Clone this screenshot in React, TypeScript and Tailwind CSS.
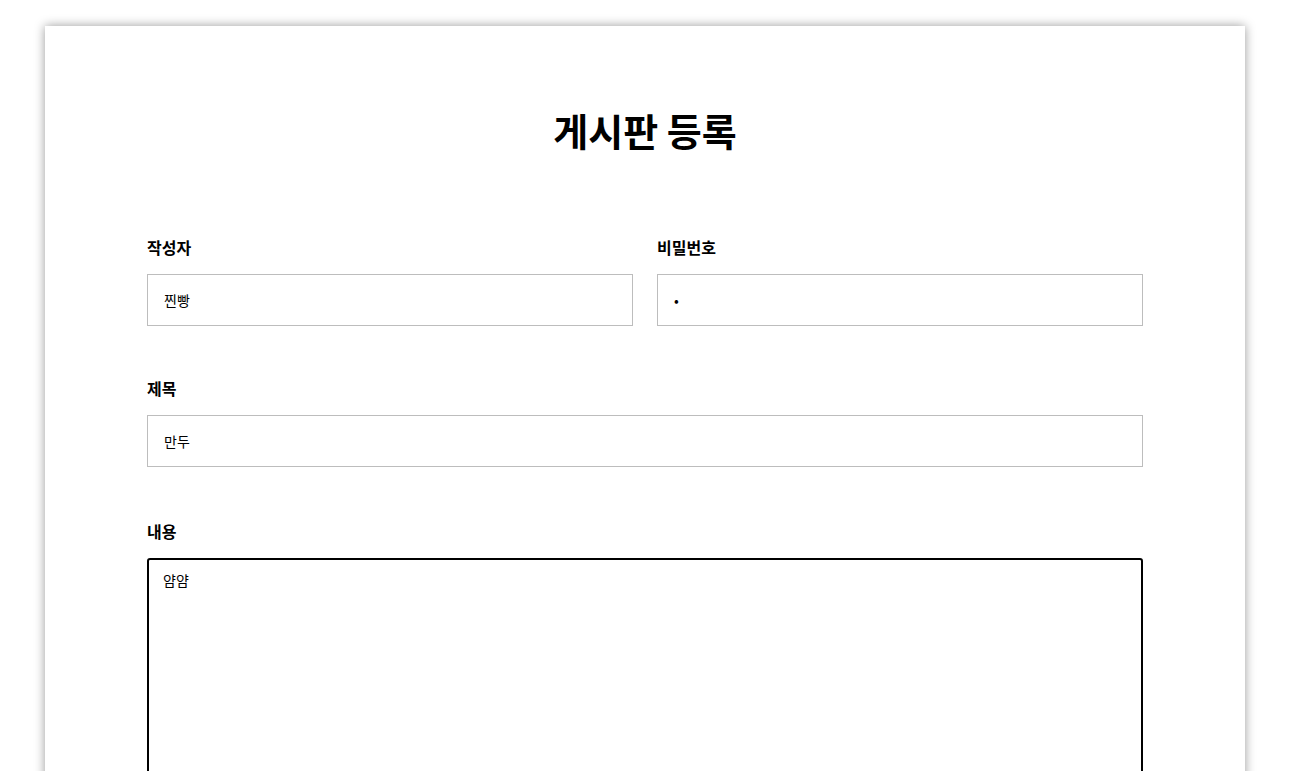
import React, { useState } from 'react';

const font = { fontFamily: '"Noto Sans CJK KR", "Noto Sans", sans-serif' };

export default function App() {
  const [writer, setWriter] = useState('찐빵');
  const [password, setPassword] = useState('1');
  const [title, setTitle] = useState('만두');
  const [contents, setContents] = useState('얌얌');

  return (
    <div className="min-h-screen bg-white pt-[26px]" style={font}>
      <div className="mx-auto w-[1200px] bg-white px-[102px] pt-[78px] pb-10 shadow-[0_0_10px_rgba(0,0,0,0.4)]">
        <h1 className="text-center text-[38px] font-bold leading-[52px] text-black">게시판 등록</h1>

        <div className="mt-[79px] flex gap-6">
          <div className="flex-1">
            <label className="block text-[16px] font-bold leading-6 text-black">작성자</label>
            <input
              type="text"
              value={writer}
              onChange={(e) => setWriter(e.target.value)}
              className="mt-[15px] h-[52px] w-full border border-[#bdbdbd] px-4 text-[14px] text-black outline-none"
            />
          </div>
          <div className="flex-1">
            <label className="block text-[16px] font-bold leading-6 text-black">비밀번호</label>
            <input
              type="password"
              value={password}
              onChange={(e) => setPassword(e.target.value)}
              className="mt-[15px] h-[52px] w-full border border-[#bdbdbd] px-4 text-[14px] text-black outline-none"
            />
          </div>
        </div>

        <div className="mt-[50px]">
          <label className="block text-[16px] font-bold leading-6 text-black">제목</label>
          <input
            type="text"
            value={title}
            onChange={(e) => setTitle(e.target.value)}
            className="mt-[15px] h-[52px] w-full border border-[#bdbdbd] px-4 text-[14px] text-black outline-none"
          />
        </div>

        <div className="mt-[52px]">
          <label className="block text-[16px] font-bold leading-6 text-black">내용</label>
          <textarea
            value={contents}
            onChange={(e) => setContents(e.target.value)}
            className="mt-[15px] h-[480px] w-full resize-none rounded-[3px] border-2 border-black px-[14px] py-[10px] text-[14px] text-black outline-none"
          />
        </div>
      </div>
    </div>
  );
}
